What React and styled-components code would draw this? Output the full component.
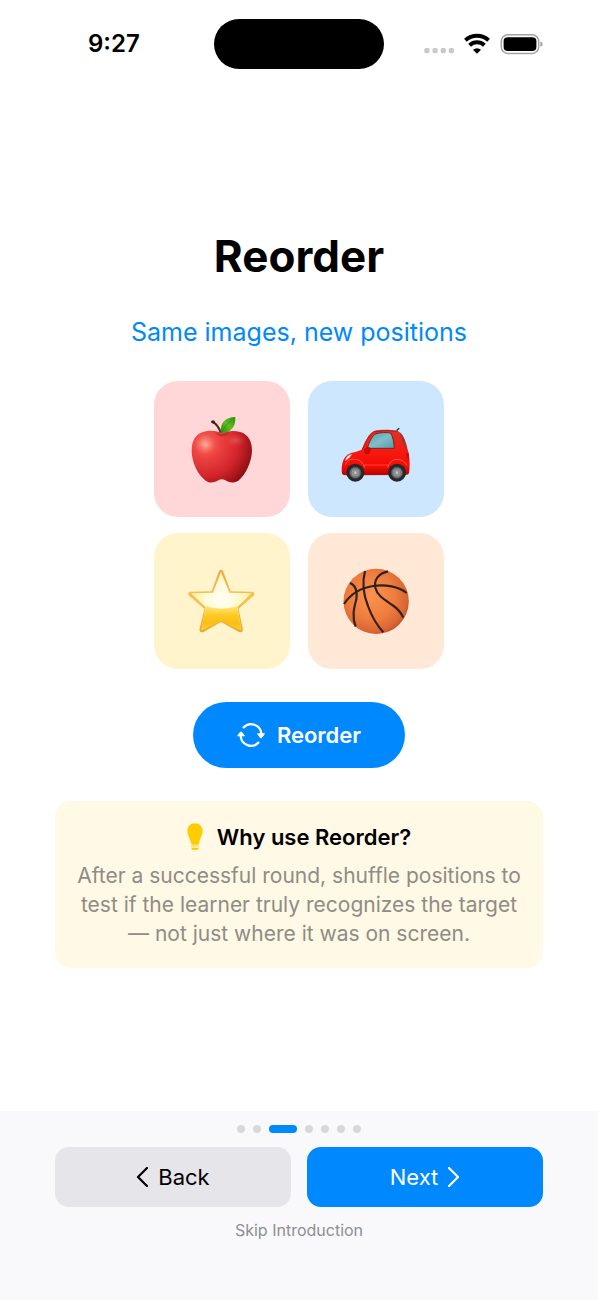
import React, { useState } from 'react';
import styled, { createGlobalStyle } from 'styled-components'

const GlobalStyle = createGlobalStyle`
    * {
        box-sizing: border-box;
    }

    body {
        margin: 0;
        background: white;
        color: black;
        font-family: Inter, "Liberation Sans", sans-serif;
    }

    button {
        font-family: inherit;
        border: none;
        padding: 0;
        cursor: pointer;
    }
`

const Page = styled.div`
    display: flex;
    flex-direction: column;
    min-height: 100vh;
`

const StatusBar = styled.header`
    display: grid;
    grid-template-columns: 1fr 170px 1fr;
    align-items: center;
    padding-top: 19px;
`

const Time = styled.div`
    padding-left: 88px;
    font-size: 24px;
    line-height: 30px;
    font-weight: 600;
`

const Island = styled.div`
    height: 50px;
    border-radius: 25px;
    background: black;
`

const StatusIcons = styled.div`
    display: flex;
    justify-content: flex-end;
    padding-right: 55px;
`

const Content = styled.main`
    flex: 1;
    display: flex;
    flex-direction: column;
    align-items: center;
    padding: 159px 55px 40px;
`

const Title = styled.h1`
    margin: 0 0 30px;
    font-size: 44px;
    line-height: 56px;
    font-weight: 700;
`

const Subtitle = styled.p`
    margin: 0 0 31px;
    font-size: 25px;
    line-height: 36px;
    color: #0088ff;
`

const TileGrid = styled.div`
    display: grid;
    grid-template-columns: repeat(2, 136px);
    gap: 16px 18px;
    margin-bottom: 33px;
`

const Tile = styled.div`
    display: flex;
    align-items: center;
    justify-content: center;
    height: 136px;
    border-radius: 24px;
    background: ${props => props.$color};
`

const ReorderButton = styled.button`
    display: flex;
    align-items: center;
    justify-content: center;
    gap: 12px;
    width: 212px;
    height: 66px;
    margin-bottom: 33px;
    border-radius: 33px;
    background: #0088ff;
    color: white;
    font-size: 22px;
    font-weight: 600;
`

const InfoBox = styled.section`
    align-self: stretch;
    padding: 20px 16px;
    border-radius: 16px;
    background: #fff9e5;
    text-align: center;
`

const InfoTitle = styled.h2`
    display: flex;
    align-items: center;
    justify-content: center;
    gap: 14px;
    margin: 0 0 8px;
    font-size: 22px;
    line-height: 32px;
    font-weight: 600;
`

const InfoText = styled.p`
    margin: 0;
    font-size: 21px;
    line-height: 29px;
    color: #8f8c85;
`

const Footer = styled.footer`
    display: flex;
    flex-direction: column;
    align-items: center;
    padding: 14px 55px 58px;
    background: #f9f9fc;
`

const Dots = styled.div`
    display: flex;
    gap: 8px;
    margin-bottom: 14px;
`

const Dot = styled.span`
    width: ${props => props.$active ? '28px' : '8px'};
    height: 8px;
    border-radius: 4px;
    background: ${props => props.$active ? '#0088ff' : '#d8d8db'};
`

const NavRow = styled.nav`
    display: grid;
    grid-template-columns: 1fr 1fr;
    gap: 16px;
    align-self: stretch;
    margin-bottom: 11px;
`

const NavButton = styled.button`
    display: flex;
    align-items: center;
    justify-content: center;
    gap: 10px;
    height: 60px;
    border-radius: 14px;
    font-size: 22px;
    background: ${props => props.$primary ? '#0088ff' : '#e5e5ea'};
    color: ${props => props.$primary ? 'white' : 'black'};
`

const SkipButton = styled.button`
    background: none;
    color: #8e8e93;
    font-size: 16px;
    line-height: 24px;
`

const Signal = () => (
    <svg width="119" height="24" viewBox="0 0 119 24">
        <g fill="#c9c9c9">
            <rect x="0.3" y="16" width="5.2" height="5.2" rx="1.6" />
            <rect x="8.5" y="16" width="5.2" height="5.2" rx="1.6" />
            <rect x="16.7" y="16" width="5.2" height="5.2" rx="1.6" />
            <rect x="24.8" y="16" width="5.2" height="5.2" rx="1.6" />
        </g>
        <g fill="none" stroke="black" strokeWidth="4">
            <path d="M41.4 8.2A17.4 17.4 0 0 1 64.6 8.2" />
            <path d="M45.6 13.2A10.8 10.8 0 0 1 60.4 13.2" />
        </g>
        <path d="M49 17.8A6 6 0 0 1 57 17.8L53 21.8Z" fill="black" />
        <rect x="77.3" y="2.8" width="37.4" height="18.6" rx="6.5" fill="none" stroke="#a3a3a3" strokeWidth="1.5" />
        <rect x="79.6" y="5.2" width="32.8" height="13.8" rx="4" fill="black" />
        <path d="M116.4 9.4Q118.8 10 118.8 12.1T116.4 14.8Z" fill="#a3a3a3" />
    </svg>
)

const Apple = () => (
    <svg width="70" height="70" viewBox="110 117 210 210">
        <defs>
            <radialGradient id="appleSkin" gradientUnits="userSpaceOnUse" cx="165" cy="205" r="150">
                <stop offset="0" stopColor="#fb6a5c" />
                <stop offset="0.3" stopColor="#ec4140" />
                <stop offset="0.65" stopColor="#d3262c" />
                <stop offset="1" stopColor="#8c0d12" />
            </radialGradient>
            <radialGradient id="appleShine" cx="0.5" cy="0.5" r="0.5">
                <stop offset="0" stopColor="#ffc4b0" stopOpacity="0.8" />
                <stop offset="1" stopColor="#ff7a68" stopOpacity="0" />
            </radialGradient>
            <linearGradient id="leaf" x1="0" y1="1" x2="1" y2="0">
                <stop offset="0" stopColor="#2c8708" />
                <stop offset="0.5" stopColor="#5fbd20" />
                <stop offset="1" stopColor="#2f920b" />
            </linearGradient>
        </defs>
        <path d="M214 174C230 168 250 165 270 171C294 178 305 200 305 226C305 262 284 302 264 317C250 326 234 322 225 316C217 312 211 312 204 316C193 323 179 326 166 317C144 302 124 264 124 226C124 196 137 176 160 170C180 165 198 168 214 174Z" fill="url(#appleSkin)" />
        <ellipse cx="165" cy="208" rx="32" ry="30" fill="url(#appleShine)" />
        <ellipse cx="256" cy="196" rx="32" ry="20" fill="url(#appleShine)" opacity="0.3" />
        <path d="M194 171Q212 184 238 171Q226 187 211 183Q200 180 194 171Z" fill="#a81218" opacity="0.5" />
        <path d="M187 141C197 146 206 157 211 173" fill="none" stroke="#4b2118" strokeWidth="6" />
        <ellipse cx="188" cy="140" rx="6" ry="4.5" fill="#3f1d16" />
        <path d="M211 174C209 143 224 127 255 126C257 154 242 176 211 174Z" fill="url(#leaf)" />
        <path d="M214 171Q227 145 249 131" fill="none" stroke="#2c8708" strokeWidth="1.6" />
    </svg>
)

const Car = () => (
    <svg width="70" height="70" viewBox="124 117 210 210">
        <defs>
            <linearGradient id="carBody" x1="0" y1="0" x2="0" y2="1">
                <stop offset="0" stopColor="#e03228" />
                <stop offset="0.5" stopColor="#f5190f" />
                <stop offset="0.8" stopColor="#f50b05" />
                <stop offset="1" stopColor="#b80502" />
            </linearGradient>
            <linearGradient id="glass" x1="0" y1="0" x2="1" y2="1">
                <stop offset="0" stopColor="#4d9dac" />
                <stop offset="0.5" stopColor="#80bdc9" />
                <stop offset="1" stopColor="#4c9eae" />
            </linearGradient>
        </defs>
        <path d="M291 171L293 164L299 160" fill="none" stroke="#34343c" strokeWidth="4" />
        <path d="M127 296C124 276 128 249 144 239C158 231 176 231 187 223C196 200 207 175 223 168C242 163 274 164 294 168C311 175 320 202 324 224C331 240 331 275 328 295Q326 300 318 300L138 301Q130 301 127 296Z" fill="url(#carBody)" />
        <path d="M188 223C198 199 210 177 224 170Q260 164 293 169" fill="none" stroke="#8f211b" strokeWidth="2.5" />
        <path d="M203 220C208 203 217 181 229 176C244 172 261 172 272 174C280 184 283 202 284 220Z" fill="url(#glass)" stroke="#8c1c18" strokeWidth="3" />
        <path d="M302 173Q317 188 321 226Q311 208 306 193Q302 182 302 173Z" fill="#8e3a3a" />
        <path d="M194 223Q205 213 213 220L210 231Q207 239 198 236Z" fill="#d60703" stroke="#980807" strokeWidth="1.5" />
        <path d="M137 257Q140 240 157 238Q150 251 137 257Z" fill="#fff1e8" stroke="#d9887f" strokeWidth="1.5" />
        <path d="M319 233L328 236L328 256Q319 247 319 233Z" fill="#bc1512" />
        <path d="M192 270L266 270" stroke="#ff5a4c" strokeWidth="2" />
        <path d="M193 296L266 296" stroke="#b80905" strokeWidth="5" />
        <path d="M137 270Q145 248 168 253Q189 256 195 278" fill="none" stroke="#ff5648" strokeWidth="3" />
        <path d="M264 278Q270 254 292 253Q315 254 322 272" fill="none" stroke="#ff5648" strokeWidth="3" />
        {[167, 292].map(x => (
            <g key={x}>
                <circle cx={x} cy="293" r="27" fill="#25272a" />
                <circle cx={x} cy="293" r="17" fill="#6f7376" stroke="#4a4d50" strokeWidth="2" />
                <circle cx={x} cy="293" r="11" fill="#9a9c9c" />
                <path d={`M${x - 14} 293H${x + 14}M${x} 279V307M${x - 9} 283L${x + 9} 303M${x + 9} 283L${x - 9} 303`} stroke="#75797a" strokeWidth="2" />
                <circle cx={x} cy="293" r="4" fill="#c6c6c4" />
            </g>
        ))}
    </svg>
)

const Star = () => (
    <svg width="70" height="70" viewBox="110 115 210 210">
        <defs>
            <linearGradient id="starEdge" x1="0" y1="0" x2="0" y2="1">
                <stop offset="0" stopColor="#f0a843" />
                <stop offset="0.45" stopColor="#f6c253" />
                <stop offset="1" stopColor="#e9ac2c" />
            </linearGradient>
            <radialGradient id="starFill" gradientUnits="userSpaceOnUse" cx="212" cy="212" r="105">
                <stop offset="0" stopColor="#fffff4" />
                <stop offset="0.4" stopColor="#fffbdc" />
                <stop offset="0.75" stopColor="#fff2b0" />
                <stop offset="1" stopColor="#ffdc70" />
            </radialGradient>
            <linearGradient id="starLow" x1="0" y1="0" x2="0" y2="1">
                <stop offset="0" stopColor="#ffe778" />
                <stop offset="0.4" stopColor="#fdc922" />
                <stop offset="0.7" stopColor="#fbbd14" />
                <stop offset="1" stopColor="#ffd030" />
            </linearGradient>
        </defs>
        <path d="M206 130Q212 123 218 130L241 191L307 192Q316 196 310 204L265 243L278 307Q276 316 266 313L212 283L160 313Q149 317 147 306L162 243L117 205Q110 197 118 192L184 191Z" fill="url(#starEdge)" />
        <path d="M212 133L237 195L304 197L261 238L273 308L212 278L153 308L166 239L122 197L188 195Z" fill="url(#starFill)" />
        <path d="M167 235Q212 252 260 235L273 308L212 279L153 308Z" fill="url(#starLow)" />
    </svg>
)

const Basketball = () => (
    <svg width="70" height="70" viewBox="124 115 210 210">
        <defs>
            <radialGradient id="ball" cx="0.43" cy="0.42" r="0.64">
                <stop offset="0" stopColor="#fb9350" />
                <stop offset="0.55" stopColor="#ef7d3d" />
                <stop offset="0.85" stopColor="#d96534" />
                <stop offset="1" stopColor="#b94b2c" />
            </radialGradient>
        </defs>
        <circle cx="229.5" cy="221" r="98" fill="url(#ball)" />
        <g fill="none" stroke="#30211b" strokeWidth="6.5">
            <path d="M133 229C151 202 181 181 220 175C257 169 298 177 321 196" />
            <path d="M196 130C187 165 190 198 205 235C216 266 232 293 251 314" />
            <path d="M265 131C238 137 222 155 227 180C233 205 257 217 278 232C294 243 304 255 311 270" />
            <path d="M151 166C169 173 173 193 170 215C163 242 156 265 168 297" />
        </g>
    </svg>
)

const CycleIcon = () => (
    <svg width="28" height="26" viewBox="0 0 84 78">
        <g fill="none" stroke="white" strokeWidth="7" strokeLinecap="round">
            <path d="M20 16A31 31 0 0 1 73 34" />
            <path d="M64 62A31 31 0 0 1 11 42" />
        </g>
        <path d="M60 34H84Q84 36 75 47Q72 50 69 47Q60 37 60 34Z" fill="white" />
        <path d="M0 43Q1 40 9 30Q12 27 15 30Q23 40 24 43Z" fill="white" />
    </svg>
)

const Bulb = () => (
    <svg width="16" height="28" viewBox="0 0 48 84">
        <path d="M24 1C10 1 1 11 1 24C1 37 8 43 11 57Q12 65 16 65H33Q36 65 37 57C40 43 47 37 47 24C47 11 38 1 24 1Z" fill="#ffcc00" />
        <path d="M12 69H36" stroke="#ffcc00" strokeWidth="3" />
        <path d="M13 74H36Q35 81 24 81T13 74Z" fill="#ffcc00" />
    </svg>
)

const Chevron = ({ d }) => (
    <svg width="12" height="20" viewBox="0 0 12 20" fill="none" stroke="currentColor" strokeWidth="2.2" strokeLinecap="round" strokeLinejoin="round">
        <path d={d} />
    </svg>
)

const pictures = [
    { name: 'apple', color: '#ffd7d9', Picture: Apple },
    { name: 'car', color: '#cce7ff', Picture: Car },
    { name: 'star', color: '#fff4cc', Picture: Star },
    { name: 'basketball', color: '#ffe8d5', Picture: Basketball }
]

const steps = [0, 1, 2, 3, 4, 5, 6]

const App = () => {
    const [tiles, setTiles] = useState(pictures)

    const onReorderClick = () => {
        setTiles([...tiles.slice(1), tiles[0]])
    }

    return (
        <Page>
            <GlobalStyle />
            <StatusBar>
                <Time>9:27</Time>
                <Island />
                <StatusIcons><Signal /></StatusIcons>
            </StatusBar>
            <Content>
                <Title>Reorder</Title>
                <Subtitle>Same images, new positions</Subtitle>
                <TileGrid>
                    {tiles.map(({ name, color, Picture }) => (
                        <Tile key={name} $color={color}><Picture /></Tile>
                    ))}
                </TileGrid>
                <ReorderButton onClick={onReorderClick}>
                    <CycleIcon />
                    Reorder
                </ReorderButton>
                <InfoBox>
                    <InfoTitle><Bulb />Why use Reorder?</InfoTitle>
                    <InfoText>
                        After a successful round, shuffle positions to test if the learner truly recognizes the target — not just where it was on screen.
                    </InfoText>
                </InfoBox>
            </Content>
            <Footer>
                <Dots>
                    {steps.map(step => <Dot key={step} $active={step === 2} />)}
                </Dots>
                <NavRow>
                    <NavButton><Chevron d="M11 1L2 10L11 19" />Back</NavButton>
                    <NavButton $primary>Next<Chevron d="M1 1L10 10L1 19" /></NavButton>
                </NavRow>
                <SkipButton>Skip Introduction</SkipButton>
            </Footer>
        </Page>
    )
}

export default App
